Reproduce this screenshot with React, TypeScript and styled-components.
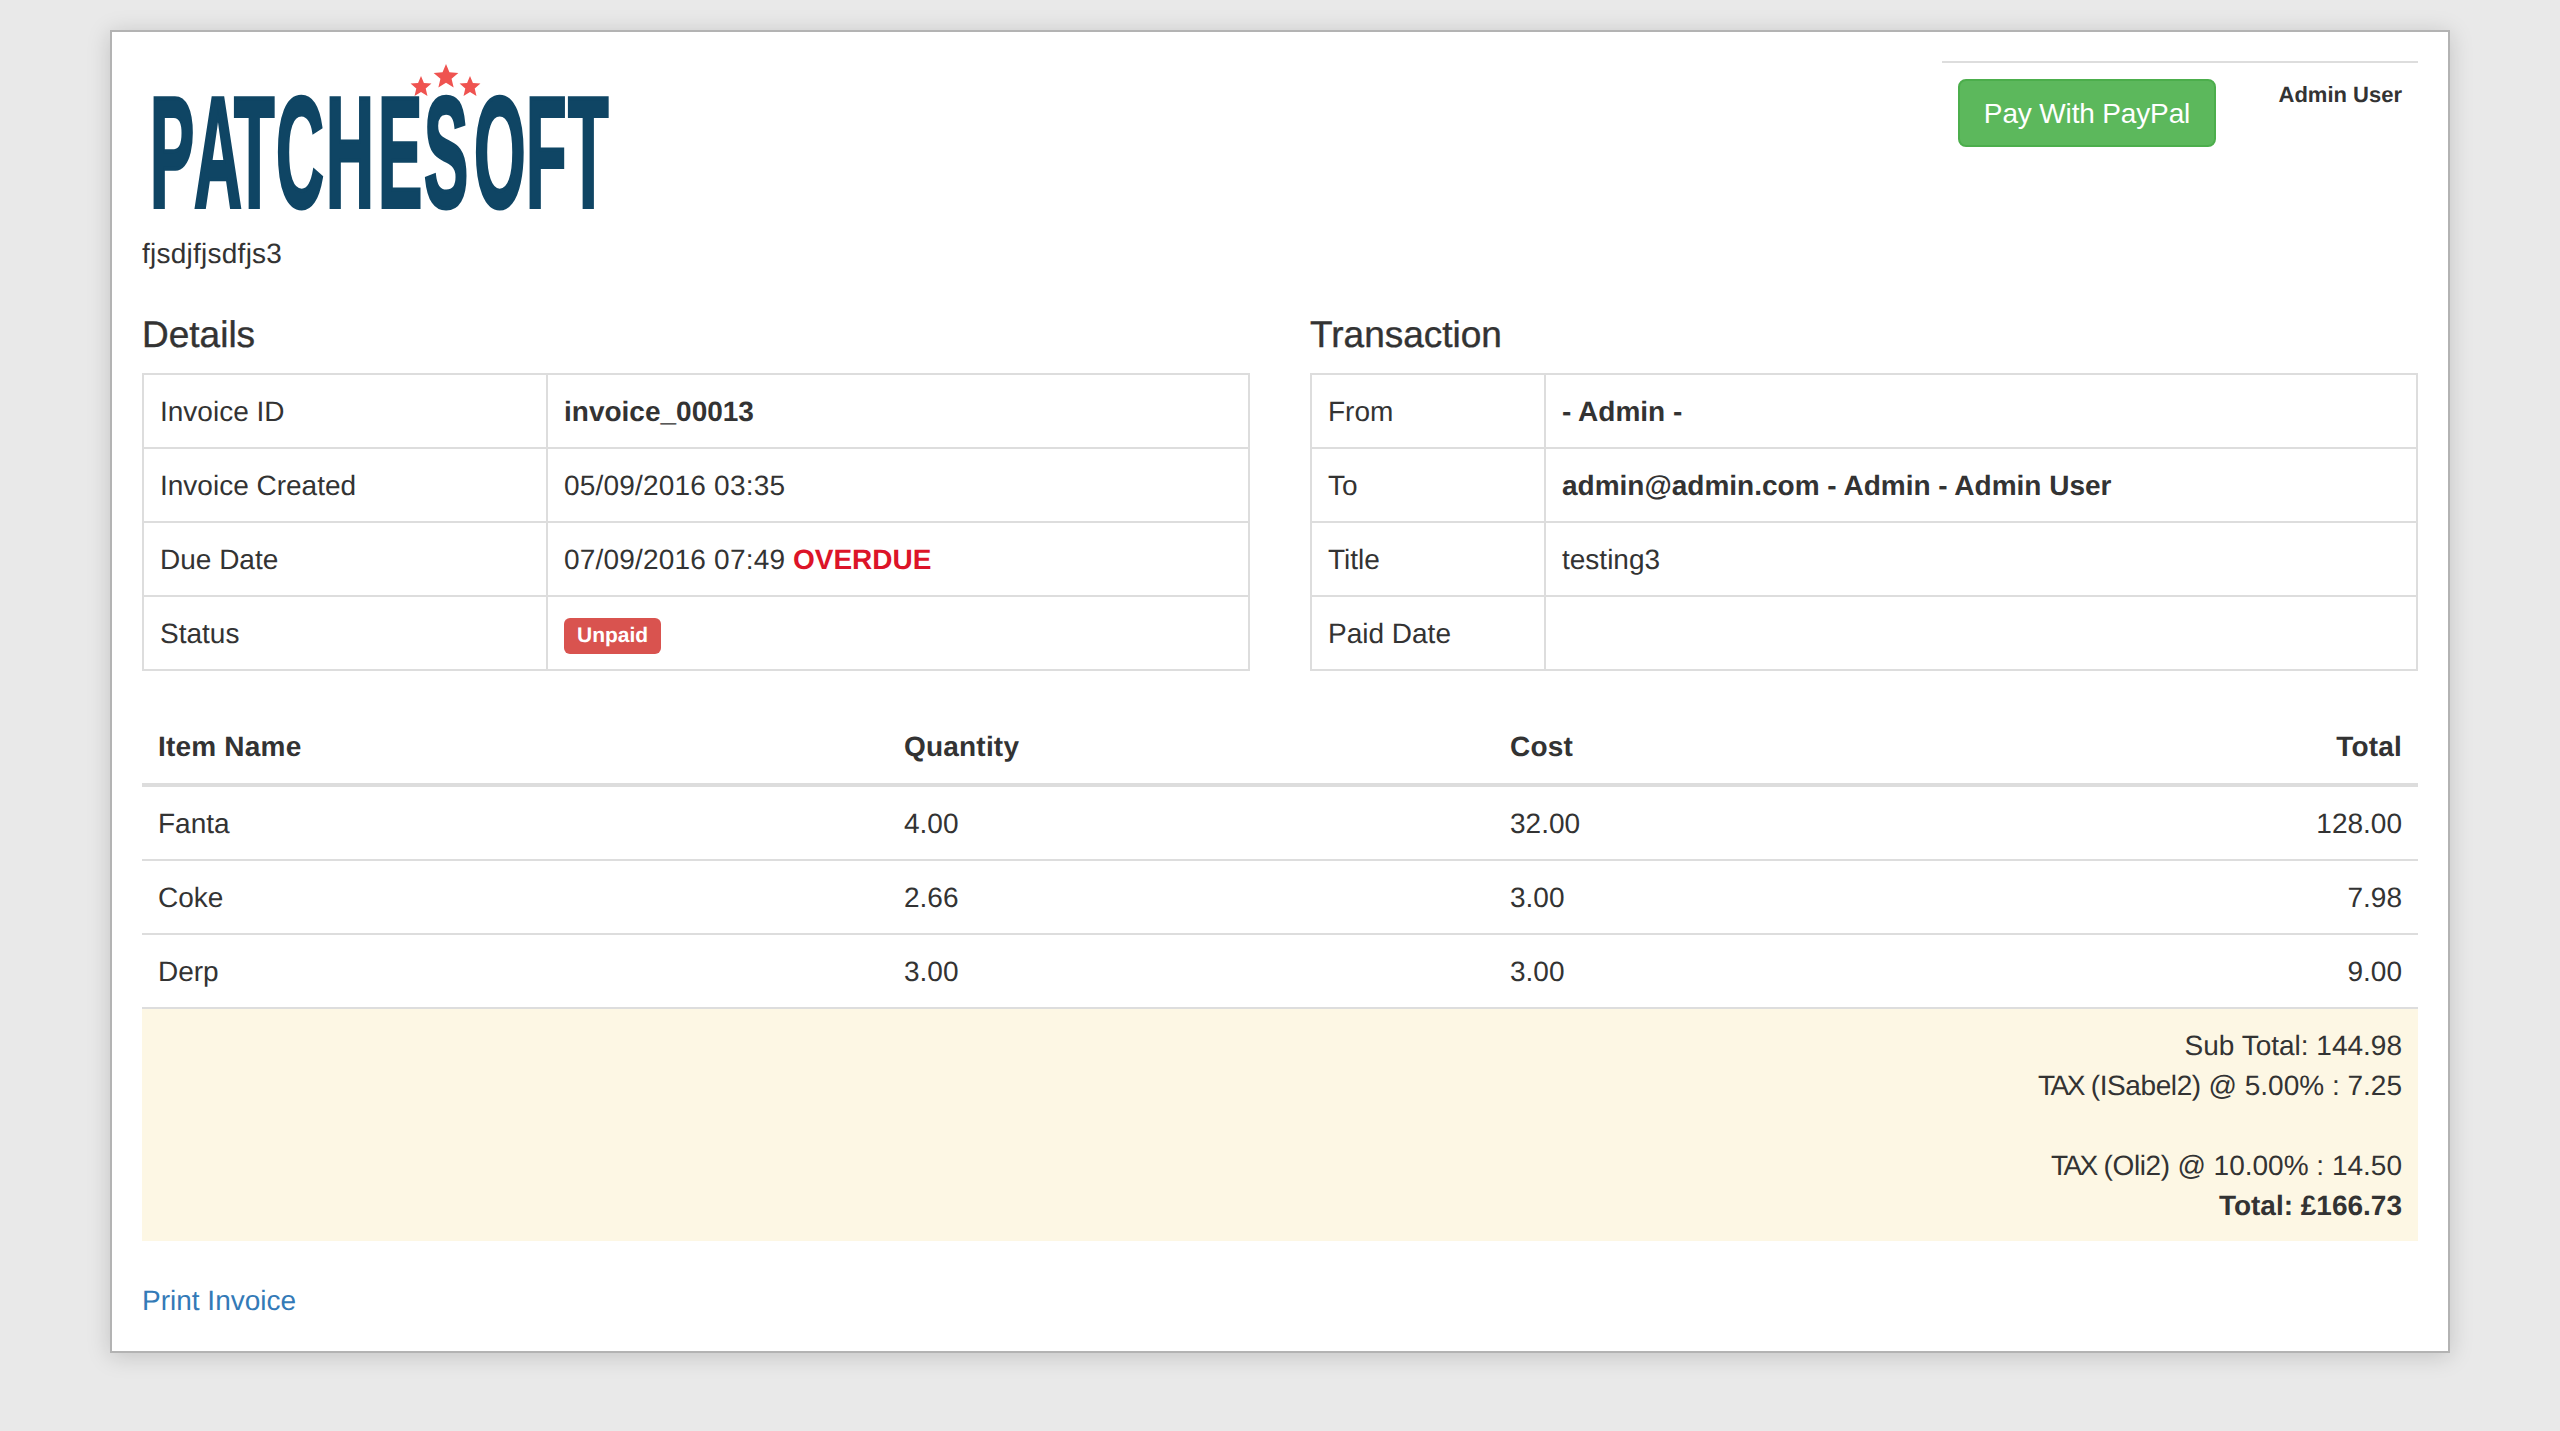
import { createGlobalStyle, styled } from 'styled-components';

const GlobalStyle = createGlobalStyle`
	html, body {
		margin: 0;
		padding: 0;
		background: #e9e9e9;
		font-family: 'Liberation Sans', Arial, sans-serif;
		font-size: 28px;
		line-height: 40px;
		color: #333;
		font-kerning: normal;
		text-rendering: geometricPrecision;
	}
	* {
		box-sizing: border-box;
	}
`;

const Page = styled.div`
	height: 1431px;
	padding: 30px 110px 0 110px;
	overflow: hidden;
`;

const Card = styled.main`
	width: 2340px;
	height: 1323px;
	padding: 0 30px;
	background: #fff;
	border: 2px solid #b3b3b3;
	box-shadow: 0 3px 22px rgba(0, 0, 0, 0.17);
`;

const Header = styled.header`
	display: flex;
	justify-content: space-between;
	align-items: flex-start;
	height: 283px;
`;

const Brand = styled.div`
	display: flex;
	flex-direction: column;
	padding-top: 30px;
`;

const LogoSvg = styled.svg`
	display: block;
	width: 480px;
	height: 172px;
	overflow: visible;
`;

const Tagline = styled.div`
	letter-spacing: 0.25px;
`;

const UserPanel = styled.div`
	display: flex;
	justify-content: space-between;
	width: 476px;
	margin-top: 29px;
	padding: 16px 16px 0 16px;
	border-top: 2px solid #ddd;
`;

const PayButton = styled.button`
	width: 258px;
	height: 68px;
	padding: 13px 0 11px;
	background: #5cb85c;
	border: 2px solid #4cae4c;
	border-radius: 8px;
	color: #fff;
	font: inherit;
	letter-spacing: -0.15px;
`;

const UserName = styled.div`
	font-size: 22px;
	font-weight: 700;
	line-height: 32px;
`;

const Columns = styled.section`
	display: grid;
	grid-template-columns: 1fr 1fr;
	gap: 60px;
`;

const SectionTitle = styled.h4`
	margin: 0 0 18px;
	font-size: 37px;
	font-weight: 500;
	line-height: 40px;
	-webkit-text-stroke: 0.4px #333;
`;

const InfoTable = styled.table<{ $labelWidth: number }>`
	width: 100%;
	table-layout: fixed;
	border-collapse: collapse;

	td {
		height: 74px;
		padding: 17px 16px 15px;
		border: 2px solid #ddd;
		vertical-align: top;
	}

	td:first-child {
		width: ${({ $labelWidth }) => $labelWidth}px;
	}
`;

const Overdue = styled.b`
	color: #dc1428;
`;

const Badge = styled.span`
	display: inline-block;
	padding: 4px 13px;
	background: #d9534f;
	border-radius: 6px;
	color: #fff;
	font-size: 21px;
	font-weight: 700;
	line-height: 28px;
	vertical-align: middle;
`;

const Spaced = styled.span<{ $spacing: number }>`
	letter-spacing: ${({ $spacing }) => $spacing}px;
`;

const ItemTable = styled.table`
	width: 100%;
	margin-top: 38px;
	table-layout: fixed;
	border-collapse: collapse;

	th,
	td {
		padding: 18px 16px 14px;
		text-align: left;
		vertical-align: top;
	}

	td {
		height: 74px;
		padding: 17px 16px 15px;
		border-bottom: 2px solid #ddd;
	}

	th {
		height: 76px;
		border-bottom: 4px solid #ddd;
		letter-spacing: 0.2px;
	}

	th:nth-child(1) {
		width: 746px;
	}

	th:nth-child(2) {
		width: 606px;
	}

	th:last-child,
	td:last-child {
		text-align: right;
	}
`;

const Totals = styled.div`
	padding: 17px 16px 15px;
	background: #fdf7e4;
	text-align: right;
`;

const PrintLink = styled.a`
	display: block;
	margin-top: 40px;
	color: #337ab7;
	text-decoration: none;
`;

const details = [
	['Invoice ID', <b>invoice_00013</b>],
	['Invoice Created', <Spaced $spacing={0.2}>05/09/2016 03:35</Spaced>],
	['Due Date', <><Spaced $spacing={0.2}>07/09/2016 07:49</Spaced> <Overdue>OVERDUE</Overdue></>],
	['Status', <Badge>Unpaid</Badge>],
];

const transaction = [
	['From', <b>- Admin -</b>],
	['To', <b>admin@admin.com - Admin - Admin User</b>],
	['Title', 'testing3'],
	['Paid Date', ''],
];

const items = [
	['Fanta', '4.00', '32.00', '128.00'],
	['Coke', '2.66', '3.00', '7.98'],
	['Derp', '3.00', '3.00', '9.00'],
];

// the logo's letters are narrow, so the text is squeezed and each glyph placed by hand
const LOGO_SCALE = 0.42;
const LOGO_LETTER_X = [8, 52, 92, 134, 184, 236, 282, 332, 384, 426];

function star(cx: number, cy: number, r: number) {
	const points = [];
	for (let i = 0; i < 10; i++) {
		const radius = i % 2 === 0 ? r : r * 0.45;
		const angle = (Math.PI / 5) * i - Math.PI / 2;
		points.push(`${cx + radius * Math.cos(angle)},${cy + radius * Math.sin(angle)}`);
	}
	return points.join(' ');
}

function Logo() {
	return (
		<LogoSvg viewBox="0 0 480 172">
			<polygon points={star(304, 15, 13)} fill="#ef5350" />
			<polygon points={star(279, 25, 11)} fill="#ef5350" />
			<polygon points={star(328, 25, 11)} fill="#ef5350" />
			<text
				transform={`scale(${LOGO_SCALE} 1)`}
				x={LOGO_LETTER_X.map((x) => x / LOGO_SCALE).join(' ')}
				y="145"
				fill="#0f4564"
				stroke="#0f4564"
				strokeWidth="4"
				vectorEffect="non-scaling-stroke"
				fontFamily="'Liberation Sans', sans-serif"
				fontWeight="700"
				fontSize="158"
			>
				PATCHESOFT
			</text>
		</LogoSvg>
	);
}

export default function App() {
	return (
		<Page>
			<GlobalStyle />
			<Card>
				<Header>
					<Brand>
						<Logo />
						<Tagline>fjsdjfjsdfjs3</Tagline>
					</Brand>
					<UserPanel>
						<PayButton>Pay With PayPal</PayButton>
						<UserName>Admin User</UserName>
					</UserPanel>
				</Header>

				<Columns>
					<div>
						<SectionTitle>Details</SectionTitle>
						<InfoTable $labelWidth={404}>
							<tbody>
								{details.map(([label, value], index) => (
									<tr key={index}>
										<td>{label}</td>
										<td>{value}</td>
									</tr>
								))}
							</tbody>
						</InfoTable>
					</div>
					<div>
						<SectionTitle>Transaction</SectionTitle>
						<InfoTable $labelWidth={234}>
							<tbody>
								{transaction.map(([label, value], index) => (
									<tr key={index}>
										<td>{label}</td>
										<td>{value}</td>
									</tr>
								))}
							</tbody>
						</InfoTable>
					</div>
				</Columns>

				<ItemTable>
					<thead>
						<tr>
							<th>Item Name</th>
							<th>Quantity</th>
							<th>Cost</th>
							<th>Total</th>
						</tr>
					</thead>
					<tbody>
						{items.map((item) => (
							<tr key={item[0]}>
								{item.map((value, index) => (
									<td key={index}>{value}</td>
								))}
							</tr>
						))}
					</tbody>
				</ItemTable>

				<Totals>
					Sub Total: 144.98
					<br />
					<Spaced $spacing={-2.5}>TAX</Spaced> <Spaced $spacing={-0.4}>(ISabel2)</Spaced> @ 5.00% : 7.25
					<br />
					<br />
					<Spaced $spacing={-2.5}>TAX</Spaced> <Spaced $spacing={-0.4}>(Oli2)</Spaced> @ 10.00% : 14.50
					<br />
					<b>Total: £166.73</b>
				</Totals>

				<PrintLink href="#">Print Invoice</PrintLink>
			</Card>
		</Page>
	);
}
